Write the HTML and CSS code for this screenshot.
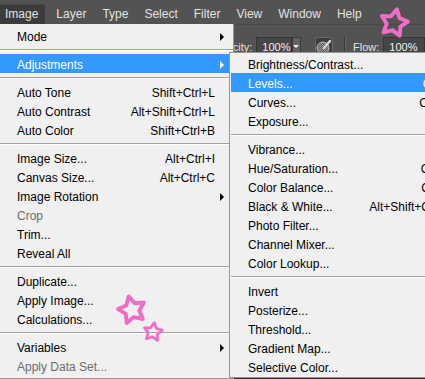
FILE: index.html
```html
<!DOCTYPE html>
<html lang="en">
<head>
    <meta charset="UTF-8">
    <meta name="viewport" content="width=device-width, initial-scale=1.0">
    <title>Image menu</title>
    <link rel="stylesheet" href="styles.css">
</head>
<body>
    <!-- Barra dei menu -->
    <div class="menubar">
        <span class="menubar-item open">Image</span>
        <span class="menubar-item">Layer</span>
        <span class="menubar-item">Type</span>
        <span class="menubar-item">Select</span>
        <span class="menubar-item">Filter</span>
        <span class="menubar-item">View</span>
        <span class="menubar-item">Window</span>
        <span class="menubar-item">Help</span>
    </div>

    <!-- Barra delle opzioni dello strumento -->
    <div class="options-bar">
        <span class="opt-label">Opacity:</span>
        <span class="opt-field">100%</span>
        <span class="opt-drop"><span class="down"></span></span>
        <span class="opt-brush">
            <svg width="16" height="16" viewBox="0 0 16 16">
                <defs>
                    <pattern id="chk" width="2" height="2" patternUnits="userSpaceOnUse">
                        <rect width="2" height="2" fill="#9a9a9a"/>
                        <rect width="1" height="1" fill="#5a5a5a"/>
                        <rect x="1" y="1" width="1" height="1" fill="#5a5a5a"/>
                    </pattern>
                </defs>
                <circle cx="7" cy="9" r="6" fill="url(#chk)" stroke="#bdbdbd" stroke-width="1"/>
                <path d="M8 9 L14 2" stroke="#d8d8d8" stroke-width="2.4" stroke-linecap="round"/>
            </svg>
        </span>
        <span class="opt-sep"></span>
        <span class="opt-label flow">Flow:</span>
        <span class="opt-field wide">100%</span>
    </div>

    <div class="workspace"></div>

    <!-- Menu Image aperto -->
    <div class="menu main-menu">
        <div class="item"><span class="label">Mode</span><span class="arrow-slot"><span class="arrow"></span></span></div>
        <div class="sep"></div>
        <div class="item active"><span class="label">Adjustments</span><span class="arrow-slot"><span class="arrow"></span></span></div>
        <div class="sep"></div>
        <div class="item"><span class="label">Auto Tone</span><span class="key">Shift+Ctrl+L</span><span class="arrow-slot"></span></div>
        <div class="item"><span class="label">Auto Contrast</span><span class="key">Alt+Shift+Ctrl+L</span><span class="arrow-slot"></span></div>
        <div class="item"><span class="label">Auto Color</span><span class="key">Shift+Ctrl+B</span><span class="arrow-slot"></span></div>
        <div class="sep"></div>
        <div class="item"><span class="label">Image Size...</span><span class="key">Alt+Ctrl+I</span><span class="arrow-slot"></span></div>
        <div class="item"><span class="label">Canvas Size...</span><span class="key">Alt+Ctrl+C</span><span class="arrow-slot"></span></div>
        <div class="item"><span class="label">Image Rotation</span><span class="arrow-slot"><span class="arrow"></span></span></div>
        <div class="item disabled"><span class="label">Crop</span><span class="arrow-slot"></span></div>
        <div class="item"><span class="label">Trim...</span><span class="arrow-slot"></span></div>
        <div class="item"><span class="label">Reveal All</span><span class="arrow-slot"></span></div>
        <div class="sep"></div>
        <div class="item"><span class="label">Duplicate...</span><span class="arrow-slot"></span></div>
        <div class="item"><span class="label">Apply Image...</span><span class="arrow-slot"></span></div>
        <div class="item"><span class="label">Calculations...</span><span class="arrow-slot"></span></div>
        <div class="sep"></div>
        <div class="item"><span class="label">Variables</span><span class="arrow-slot"><span class="arrow"></span></span></div>
        <div class="item disabled"><span class="label">Apply Data Set...</span><span class="arrow-slot"></span></div>
    </div>

    <!-- Sottomenu Adjustments -->
    <div class="menu sub-menu">
        <div class="item"><span class="label">Brightness/Contrast...</span><span class="arrow-slot"></span></div>
        <div class="item active"><span class="label">Levels...</span><span class="key">Ctrl+L</span><span class="arrow-slot"></span></div>
        <div class="item"><span class="label">Curves...</span><span class="key">Ctrl+M</span><span class="arrow-slot"></span></div>
        <div class="item"><span class="label">Exposure...</span><span class="arrow-slot"></span></div>
        <div class="sep"></div>
        <div class="item"><span class="label">Vibrance...</span><span class="arrow-slot"></span></div>
        <div class="item"><span class="label">Hue/Saturation...</span><span class="key">Ctrl+U</span><span class="arrow-slot"></span></div>
        <div class="item"><span class="label">Color Balance...</span><span class="key">Ctrl+B</span><span class="arrow-slot"></span></div>
        <div class="item"><span class="label">Black &amp; White...</span><span class="key">Alt+Shift+Ctrl+B</span><span class="arrow-slot"></span></div>
        <div class="item"><span class="label">Photo Filter...</span><span class="arrow-slot"></span></div>
        <div class="item"><span class="label">Channel Mixer...</span><span class="arrow-slot"></span></div>
        <div class="item"><span class="label">Color Lookup...</span><span class="arrow-slot"></span></div>
        <div class="sep"></div>
        <div class="item"><span class="label">Invert</span><span class="key">Ctrl+I</span><span class="arrow-slot"></span></div>
        <div class="item"><span class="label">Posterize...</span><span class="arrow-slot"></span></div>
        <div class="item"><span class="label">Threshold...</span><span class="arrow-slot"></span></div>
        <div class="item"><span class="label">Gradient Map...</span><span class="arrow-slot"></span></div>
        <div class="item"><span class="label">Selective Color...</span><span class="arrow-slot"></span></div>
    </div>

    <!-- Stelline rosa disegnate sopra lo screenshot -->
    <svg class="doodles" width="425" height="379" viewBox="0 0 425 379">
        <g fill="none" stroke="#f06cc6" stroke-width="2.8" stroke-linejoin="round">
            <polygon transform="translate(394 23) rotate(12) scale(1.4)" points="0,-10 3.1,-4.2 9.5,-3.1 5,1.6 5.9,8.1 0,5.2 -5.9,8.1 -5,1.6 -9.5,-3.1 -3.1,-4.2"/>
            <polygon transform="translate(132 310) rotate(-14) scale(1.4)" points="0,-10 3.1,-4.2 9.5,-3.1 5,1.6 5.9,8.1 0,5.2 -5.9,8.1 -5,1.6 -9.5,-3.1 -3.1,-4.2"/>
            <polygon transform="translate(153 332) rotate(8) scale(0.95)" points="0,-10 3.1,-4.2 9.5,-3.1 5,1.6 5.9,8.1 0,5.2 -5.9,8.1 -5,1.6 -9.5,-3.1 -3.1,-4.2"/>
        </g>
    </svg>
</body>
</html>
```

FILE: styles.css
```css
/* Pagina: finestra di Photoshop */
body {
    margin: 0;
    width: 425px;
    height: 379px;
    overflow: hidden;
    position: relative;
    background-color: #535353;
    font-family: "Liberation Sans", Arial, sans-serif;
    font-size: 12px;
}

/* Barra dei menu */
.menubar {
    display: flex;
    height: 24px;
    padding-top: 4px;
    box-sizing: border-box;
    background-color: #535353;
}

.menubar-item {
    color: #e2e2e2;
    line-height: 20px;
    padding: 0 2px 0 14px;
}

.menubar-item.open {
    background-color: #3c3c3c;
    padding: 0 7px 0 5px;
    margin-right: -3px;
    box-shadow: inset 0 1px 0 #474747;
}

/* Barra delle opzioni */
.options-bar {
    display: flex;
    align-items: center;
    height: 36px;
    padding: 8px 0 0 212px;
    box-sizing: border-box;
    background-color: #535353;
    border-top: 1px solid #4a4a4a;
    color: #e4e4e4;
    font-size: 11px;
}

.opt-label {
    margin-right: 4px;
}

.opt-field {
    width: 39px;
    height: 20px;
    line-height: 19px;
    box-sizing: border-box;
    padding-left: 5px;
    background-color: #464646;
    border: 1px solid #363636;
    color: #f0f0f0;
}

.opt-field.wide {
    width: 60px;
}

.opt-drop {
    width: 14px;
    height: 20px;
    box-sizing: border-box;
    background-color: #626262;
    border: 1px solid #3a3a3a;
    display: flex;
    align-items: center;
    justify-content: center;
}

.down {
    border-top: 3px solid #f0f0f0;
    border-left: 3px solid transparent;
    border-right: 3px solid transparent;
}

.opt-brush {
    width: 22px;
    height: 20px;
    margin-left: 14px;
    box-sizing: border-box;
    background-color: #3e3e3e;
    border: 1px solid #6a6a6a;
    border-radius: 2px;
    display: flex;
    align-items: center;
    justify-content: center;
}

.opt-sep {
    width: 1px;
    height: 20px;
    margin: 0 8px 0 11px;
    background-color: #3c3c3c;
    box-shadow: 1px 0 0 #626262;
}

.workspace {
    height: 400px;
    background-color: #282828;
}

/* Menu a tendina */
.menu {
    position: absolute;
    background-color: #f0f0f0;
    color: #000;
    box-sizing: border-box;
}

.main-menu {
    left: 0;
    top: 24px;
    width: 234px;
    height: 355px;
    padding-top: 2px;
    border-right: 1px solid #979797;
    border-bottom: 1px solid #979797;
}

.sub-menu {
    left: 229px;
    top: 52px;
    width: 246px;
    padding: 1px;
    border: 1px solid #979797;
}

.item {
    display: flex;
    align-items: center;
    height: 19px;
    box-sizing: border-box;
    padding: 3px 5px 0 17px;
    line-height: 16px;
    white-space: nowrap;
}

.item .label {
    flex: 1;
}

.item.active {
    background-color: #3399ff;
    color: #fff;
}

.item.disabled {
    color: #6d6d6d;
}

.arrow-slot {
    width: 13px;
    flex: none;
    display: flex;
    align-items: center;
}

.arrow {
    margin-left: 5px;
    border-left: 4px solid #000;
    border-top: 4px solid transparent;
    border-bottom: 4px solid transparent;
}

.item.active .arrow {
    border-left-color: #fff;
}

.sep {
    margin: 4px 0 3px;
    border-top: 1px solid #a0a0a0;
    border-bottom: 1px solid #fff;
}

/* Disegni rosa sopra tutto */
.doodles {
    position: absolute;
    left: 0;
    top: 0;
    pointer-events: none;
}
```
